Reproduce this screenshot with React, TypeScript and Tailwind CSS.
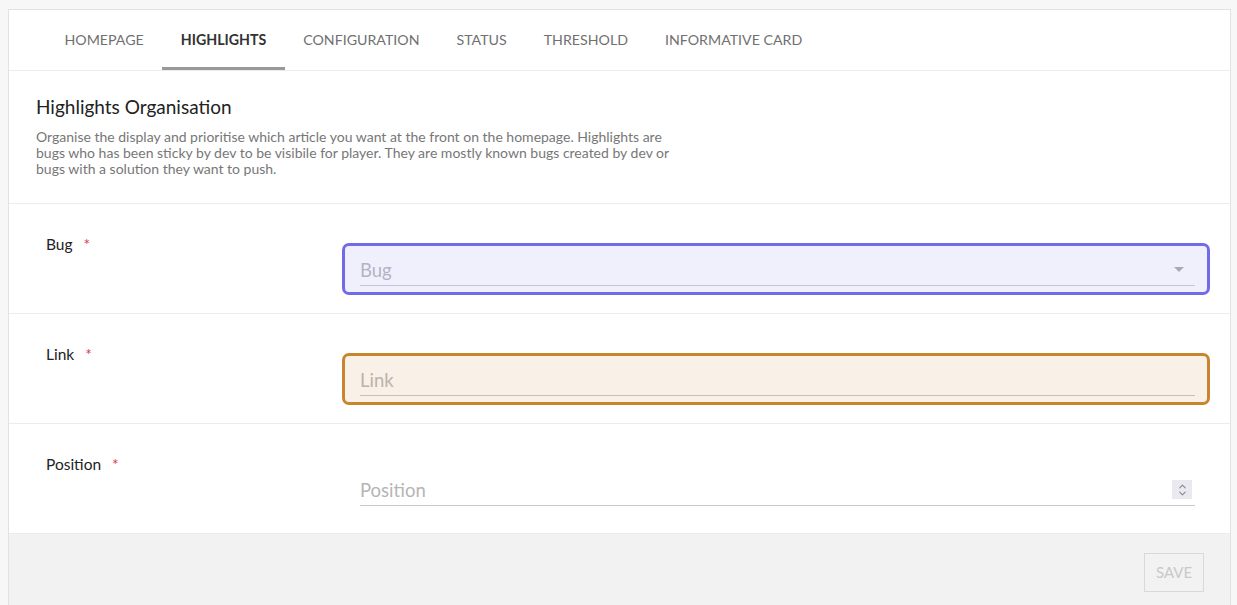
import { ChevronDown, ChevronUp } from "lucide-react";

const tabs = ["Homepage", "Highlights", "Configuration", "Status", "Threshold", "Informative card"];

type FieldProps = {
    label: string;
    placeholder: string;
    tone: "blue" | "orange" | "plain";
    kind: "select" | "text" | "number";
};

function FieldRow({ label, placeholder, tone, kind }: FieldProps) {
    const box =
        tone === "blue"
            ? "border-[#716ae9] bg-[#f0f0fc]"
            : tone === "orange"
              ? "border-[#c8852d] bg-[#f9f0e7]"
              : "border-transparent bg-transparent";
    const text =
        tone === "blue" ? "text-[#b3b3c6]" : tone === "orange" ? "text-[#bdb3aa]" : "text-[#b5b5b5]";
    const line =
        tone === "blue" ? "border-[#c6c5d6]" : tone === "orange" ? "border-[#ccc0b6]" : "border-[#c9c9c9]";

    return (
        <div className="flex pt-[27px] pl-[37px] pr-[20px] border-b border-[#ececec] last:border-b-0">
            <div className="w-[296px] shrink-0 text-[15.5px] leading-[26px] text-[#222]">
                {label}
                <span className="ml-[11px] text-[#e0384f]">*</span>
            </div>
            <div className={`flex-1 mt-[12px] mb-[18px] h-[52px] rounded-[7px] border-[3px] pl-[15px] pr-[12px] ${box}`}>
                <div className={`flex h-[40px] items-end justify-between border-b pb-[2px] ${line}`}>
                    <span className={`text-[18.5px] leading-[26px] ${text}`}>{placeholder}</span>
                    {kind === "select" && (
                        <svg width="10" height="6" viewBox="0 0 10 6" className="mb-[10px] mr-[11px]">
                            <path d="M0 0 L10 0 L5 5 Z" fill="#a9a9b4" />
                        </svg>
                    )}
                    {kind === "number" && (
                        <div className="mb-[4px] mr-[3px] flex h-[19px] w-[20px] flex-col items-center justify-center bg-[#e9e9ef] text-[#85858e]">
                            <ChevronUp size={11} strokeWidth={2.2} className="-mb-[2px]" />
                            <ChevronDown size={11} strokeWidth={2.2} className="-mt-[2px]" />
                        </div>
                    )}
                </div>
            </div>
        </div>
    );
}

export default function App() {
    return (
        <div className="min-h-screen w-full bg-[#f7f7f7] pt-[9px] pl-[8px] pr-[6px]" style={{ fontFamily: "Lato, 'Open Sans', sans-serif" }}>
            <div className="border border-[#e2e2e2] bg-white">
                {/* Tabs */}
                <div className="flex pl-[37px] border-b border-[#ececec]">
                    {tabs.map((t, i) => (
                        <div
                            key={t}
                            className={`relative flex h-[60px] items-center px-[18.5px] text-[14.2px] uppercase ${
                                i === 1 ? "font-bold text-[#333]" : "text-[#707070]"
                            }`}
                        >
                            {t}
                            {i === 1 && <div className="absolute bottom-0 left-0 right-0 h-[3px] bg-[#999]" />}
                        </div>
                    ))}
                </div>

                {/* Header */}
                <div className="px-[27px] pt-[25px] pb-[26px] border-b border-[#ececec]">
                    <h1 className="text-[19px] leading-[22px] text-[#222]">Highlights Organisation</h1>
                    <p className="mt-[11px] max-w-[645px] text-[14px] leading-[16px] text-[#777]">
                        Organise the display and prioritise which article you want at the front on the homepage. Highlights are bugs who has been sticky by dev to be visibile for player. They are mostly known bugs created by dev or bugs with a solution they want to push.
                    </p>
                </div>

                {/* Fields */}
                <FieldRow label="Bug" placeholder="Bug" tone="blue" kind="select" />
                <FieldRow label="Link" placeholder="Link" tone="orange" kind="text" />
                <FieldRow label="Position" placeholder="Position" tone="plain" kind="number" />

                {/* Footer */}
                <div className="flex h-[80px] justify-end bg-[#f2f2f2] pt-[19px] pr-[26px]">
                    <button className="h-[39px] w-[60px] border border-[#d9d9d9] text-[15px] uppercase text-[#c9c9c9]">
                        Save
                    </button>
                </div>
            </div>
        </div>
    );
}
